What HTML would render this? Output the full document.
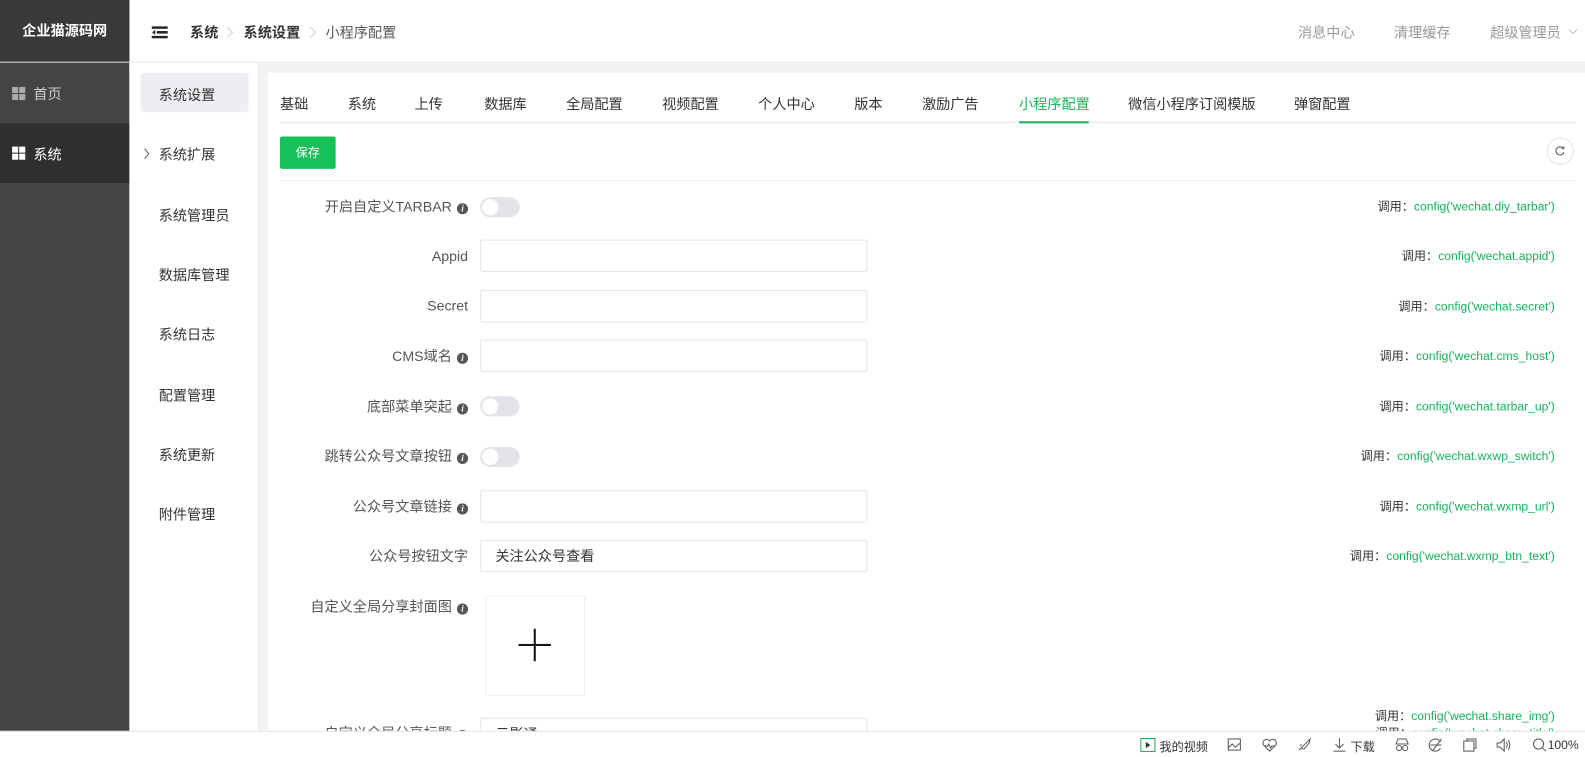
<!DOCTYPE html>
<html><head><meta charset="utf-8"><style>
*{margin:0;padding:0;box-sizing:border-box}
html,body{width:1585px;height:757px;overflow:hidden;background:#fff}
body{font-family:"Liberation Sans","Noto Sans CJK SC",sans-serif;font-size:14px;color:#333}
#w{position:absolute;left:0;top:0;width:1568px;height:749px;transform:scale(1.0109);transform-origin:0 0;overflow:hidden}
.a{position:absolute;white-space:nowrap}
.sq{position:absolute;width:13px;height:13px}
.sq i{position:absolute;width:6px;height:6px}
.lbl{position:absolute;right:1105px;text-align:right;color:#555;font-size:14px;line-height:20px}
.ic{display:inline-block;width:11px;height:11px;border-radius:50%;background:#555;color:#fff;font-size:9px;line-height:11px;text-align:center;font-style:italic;font-weight:bold;font-family:"Liberation Serif",serif;margin-left:5px;vertical-align:0px}
.inp{position:absolute;left:475px;width:383px;height:32px;border:1px solid #e2e2e2;border-radius:2px;font-size:14px;color:#333;padding-left:14px;line-height:30px}
.tg{position:absolute;left:475px;width:39px;height:20px;border-radius:10px;background:#e3e3ea}
.tg:after{content:"";position:absolute;left:2px;top:2px;width:16px;height:16px;border-radius:50%;background:#fff}
.cf{position:absolute;right:30px;font-size:12px;color:#333;line-height:16px}
.cf b{font-weight:normal;color:#16b35a}
.tab{position:absolute;top:93px;font-size:14px;color:#333}
.m{position:absolute;left:157px;font-size:14px;color:#333}
</style></head><body><div id="w">
<div class="a" style="left:0;top:0;width:128px;height:723px;background:#444"></div>
<div class="a" style="left:0;top:0;width:128px;height:61px;background:#3a3a3a;color:#fff;font-weight:bold;font-size:14px;line-height:61px;text-align:center">企业猫源码网</div>
<div class="a" style="left:0;top:61px;width:128px;height:1px;background:#ddd"></div>
<div class="sq" style="left:12px;top:86px"><i style="left:0;top:0;background:#aaa"></i><i style="left:7px;top:0;background:#aaa"></i><i style="left:0;top:7px;background:#aaa"></i><i style="left:7px;top:7px;background:#aaa"></i></div>
<div class="a" style="left:33px;top:83px;color:#ccc">首页</div>
<div class="a" style="left:0;top:122px;width:128px;height:59px;background:#2f2f2f"></div>
<div class="sq" style="left:12px;top:145px"><i style="left:0;top:0;background:#fff"></i><i style="left:7px;top:0;background:#fff"></i><i style="left:0;top:7px;background:#fff"></i><i style="left:7px;top:7px;background:#fff"></i></div>
<div class="a" style="left:33px;top:143px;color:#fff">系统</div>
<div class="a" style="left:128px;top:61px;width:1440px;height:1px;background:#e8e8e8"></div>
<svg class="a" style="left:150px;top:26px" width="16" height="12"><rect x="0" y="0" width="16" height="2.5" fill="#222"/><rect x="5" y="4.7" width="11" height="2.5" fill="#222"/><rect x="0" y="9.5" width="16" height="2.5" fill="#222"/><path d="M3.5 3.5 L0.5 6 L3.5 8.5Z" fill="#222"/></svg>
<div class="a" style="left:188px;top:22px;font-weight:bold;color:#333">系统</div>
<svg class="a" style="left:224px;top:26px" width="7" height="12"><path d="M1 1 L6 6 L1 11" stroke="#ccc" fill="none"/></svg>
<div class="a" style="left:241px;top:22px;font-weight:bold;color:#333">系统设置</div>
<svg class="a" style="left:306px;top:26px" width="7" height="12"><path d="M1 1 L6 6 L1 11" stroke="#ccc" fill="none"/></svg>
<div class="a" style="left:322px;top:22px;color:#555">小程序配置</div>
<div class="a" style="left:1284px;top:22px;color:#999">消息中心</div>
<div class="a" style="left:1379px;top:22px;color:#999">清理缓存</div>
<div class="a" style="left:1474px;top:22px;color:#999">超级管理员</div>
<svg class="a" style="left:1551px;top:28px" width="10" height="7"><path d="M1 1 L5 5 L9 1" stroke="#bbb" fill="none"/></svg>
<div class="a" style="left:128px;top:62px;width:1440px;height:10px;background:#f2f2f2"></div>
<div class="a" style="left:255px;top:62px;width:10px;height:661px;background:#f2f2f2"></div>
<div class="a" style="left:128px;top:62px;width:127px;height:661px;background:#fff"></div>
<div class="a" style="left:139px;top:72px;width:107px;height:39px;background:#eceef1;border-radius:4px"></div>
<div class="m" style="top:84px">系统设置</div>
<svg class="a" style="left:141px;top:146px" width="8" height="12"><path d="M2 1 L6 6 L2 11" stroke="#555" fill="none"/></svg>
<div class="m" style="top:143px">系统扩展</div>
<div class="m" style="top:203px">系统管理员</div>
<div class="m" style="top:262px">数据库管理</div>
<div class="m" style="top:321px">系统日志</div>
<div class="m" style="top:381px">配置管理</div>
<div class="m" style="top:440px">系统更新</div>
<div class="m" style="top:499px">附件管理</div>
<div class="tab" style="left:277px">基础</div>
<div class="tab" style="left:344px">系统</div>
<div class="tab" style="left:410px">上传</div>
<div class="tab" style="left:479px">数据库</div>
<div class="tab" style="left:560px">全局配置</div>
<div class="tab" style="left:655px">视频配置</div>
<div class="tab" style="left:750px">个人中心</div>
<div class="tab" style="left:845px">版本</div>
<div class="tab" style="left:912px">激励广告</div>
<div class="tab" style="left:1008px;color:#16b35a">小程序配置</div>
<div class="tab" style="left:1116px">微信小程序订阅模版</div>
<div class="tab" style="left:1280px">弹窗配置</div>
<div class="a" style="left:277px;top:120px;width:1281px;height:2px;background:#eee"></div>
<div class="a" style="left:1008px;top:120px;width:69px;height:2px;background:#16b35a"></div>
<div class="a" style="left:277px;top:135px;width:55px;height:32px;background:#16c15a;border-radius:2px;color:#fff;font-size:12px;line-height:32px;text-align:center">保存</div>
<div class="a" style="left:1530px;top:136px;width:27px;height:27px;border:1px solid #e2e2e2;border-radius:50%"></div>
<svg class="a" style="left:1538px;top:144px" width="11" height="11"><path d="M8.5 3 A4 4 0 1 0 9 6.5" stroke="#666" fill="none" stroke-width="1.1"/><path d="M6.5 2.6 L9 3.2 L9 0.8" stroke="#666" fill="none" stroke-width="1.1"/></svg>
<div class="a" style="left:277px;top:178px;width:1281px;height:1px;background:#eee"></div>
<div class="lbl" style="top:194px">开启自定义TARBAR<span class="ic">i</span></div>
<div class="tg" style="top:195px"></div>
<div class="cf" style="top:196px">调用：<b>config('wechat.diy_tarbar')</b></div>
<div class="lbl" style="top:243px;right:1105px">Appid</div>
<div class="inp" style="top:237px"></div>
<div class="cf" style="top:245px">调用：<b>config('wechat.appid')</b></div>
<div class="lbl" style="top:292px">Secret</div>
<div class="inp" style="top:287px"></div>
<div class="cf" style="top:295px">调用：<b>config('wechat.secret')</b></div>
<div class="lbl" style="top:342px">CMS域名<span class="ic">i</span></div>
<div class="inp" style="top:336px"></div>
<div class="cf" style="top:344px">调用：<b>config('wechat.cms_host')</b></div>
<div class="lbl" style="top:392px">底部菜单突起<span class="ic">i</span></div>
<div class="tg" style="top:392px"></div>
<div class="cf" style="top:394px">调用：<b>config('wechat.tarbar_up')</b></div>
<div class="lbl" style="top:441px">跳转公众号文章按钮<span class="ic">i</span></div>
<div class="tg" style="top:442px"></div>
<div class="cf" style="top:443px">调用：<b>config('wechat.wxwp_switch')</b></div>
<div class="lbl" style="top:491px">公众号文章链接<span class="ic">i</span></div>
<div class="inp" style="top:485px"></div>
<div class="cf" style="top:493px">调用：<b>config('wechat.wxmp_url')</b></div>
<div class="lbl" style="top:540px">公众号按钮文字</div>
<div class="inp" style="top:534px">关注公众号查看</div>
<div class="cf" style="top:542px">调用：<b>config('wechat.wxmp_btn_text')</b></div>
<div class="lbl" style="top:590px">自定义全局分享封面图<span class="ic">i</span></div>
<div class="a" style="left:480px;top:589px;width:99px;height:99px;border:1px solid #eee"></div>
<div class="a" style="left:528px;top:622px;width:2px;height:32px;background:#111"></div>
<div class="a" style="left:513px;top:637px;width:32px;height:2px;background:#111"></div>
<div class="cf" style="top:700px">调用：<b>config('wechat.share_img')</b></div>
<div class="lbl" style="top:715px">自定义全局分享标题<span class="ic">i</span></div>
<div class="inp" style="top:710px">云影通</div>
<div class="cf" style="top:717px">调用：<b>config('wechat.share_title')</b></div>
<div class="a" style="left:0;top:723px;width:1568px;height:26px;background:#fff;border-top:1px solid #e5e5e5;font-size:12px;color:#333">
 <svg class="a" style="left:1128px;top:6px" width="15" height="14"><rect x="0.5" y="0.5" width="14" height="13" fill="none" stroke="#16a34a"/><path d="M5.5 4 L10 7 L5.5 10Z" fill="#333"/></svg>
 <span class="a" style="left:1147px;top:6px">我的视频</span>
 <svg class="a" style="left:1214px;top:6px" width="14" height="14" fill="none" stroke="#555"><rect x="1" y="1" width="12" height="11"/><path d="M1 10 L5 6 L8 9 L13 5"/></svg>
 <svg class="a" style="left:1248px;top:6px" width="16" height="14" fill="none" stroke="#555"><path d="M8 13 L2 7 A3.3 3.3 0 0 1 8 3 A3.3 3.3 0 0 1 14 7Z M3 8 H6 L7 6 L9 10 L10 8 H13"/></svg>
 <svg class="a" style="left:1283px;top:6px" width="14" height="14" fill="none" stroke="#555"><path d="M4 10 L12 2 L13 1 L12 5 L7 11Z M4 10 L2 12 M3 7 L5 7"/></svg>
 <svg class="a" style="left:1318px;top:5px" width="14" height="15" fill="none" stroke="#555"><path d="M7 1 V11 M3 7 L7 11 L11 7 M1 14 H13"/></svg>
 <span class="a" style="left:1336px;top:6px">下载</span>
 <svg class="a" style="left:1380px;top:6px" width="14" height="14" fill="none" stroke="#555"><path d="M3 1 H11 L13 6 H1Z"/><circle cx="4" cy="10" r="2.5"/><circle cx="10" cy="10" r="2.5"/></svg>
 <svg class="a" style="left:1413px;top:6px" width="14" height="14" fill="none" stroke="#555"><path d="M12 4 A6 6 0 1 0 12 10 M2 7 H13 M13 1 L4 13"/></svg>
 <svg class="a" style="left:1447px;top:6px" width="14" height="14" fill="none" stroke="#555"><rect x="1" y="3" width="10" height="10"/><path d="M4 3 V1 H13 V10 H11"/></svg>
 <svg class="a" style="left:1480px;top:6px" width="16" height="14" fill="none" stroke="#555"><path d="M1 5 H4 L8 1 V13 L4 9 H1Z M10 4 Q12 7 10 10 M12 2 Q15 7 12 12"/></svg>
 <svg class="a" style="left:1516px;top:6px" width="14" height="14" fill="none" stroke="#555"><circle cx="6" cy="6" r="5"/><path d="M10 10 L13 13"/></svg>
 <span class="a" style="left:1531px;top:6px">100%</span>
</div>
</div></body></html>
